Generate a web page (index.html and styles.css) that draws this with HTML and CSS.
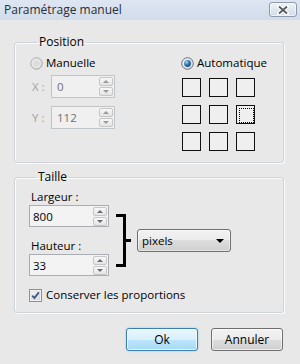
FILE: index.html
```html
<!DOCTYPE html>
<html lang="fr">
<head>
<meta charset="utf-8">
<title>Paramétrage manuel</title>
<link rel="stylesheet" href="styles.css">
</head>
<body>
<div class="titlebar">
  <span class="title">Paramétrage manuel</span>
  <span class="close">
    <svg width="12" height="10" viewBox="0 0 12 10"><path d="M2 1.5 L10 8.5 M10 1.5 L2 8.5" stroke="#fff" stroke-width="4" stroke-linecap="square"/><path d="M2 1.5 L10 8.5 M10 1.5 L2 8.5" stroke="#555b66" stroke-width="1.8"/></svg>
  </span>
</div>
<div class="content">
  <fieldset class="group group-pos">
    <legend>Position</legend>
    <div class="pos-cols">
      <div class="col-manual">
        <div class="radio disabled">
          <svg width="13" height="13" viewBox="0 0 13 13"><defs><linearGradient id="rg1" x1="0" y1="0" x2="1" y2="1"><stop offset="0" stop-color="#e9e9e9"/><stop offset="1" stop-color="#c9c9c9"/></linearGradient></defs><circle cx="6.5" cy="6.5" r="5.8" fill="url(#rg1)" stroke="#b1b1b1"/><circle cx="6.5" cy="6.5" r="4" fill="#dcdcdc" stroke="#f4f4f4" stroke-width="0.8"/></svg>
          <span>Manuelle</span>
        </div>
        <div class="coord">
          <span class="coord-label">X :</span>
          <div class="spin disabled"><span class="val">0</span><span class="arrows"><span class="arr up"></span><span class="arr down"></span></span></div>
        </div>
        <div class="coord coord-y">
          <span class="coord-label">Y :</span>
          <div class="spin disabled"><span class="val">112</span><span class="arrows"><span class="arr up"></span><span class="arr down"></span></span></div>
        </div>
      </div>
      <div class="col-auto">
        <div class="radio">
          <svg width="13" height="13" viewBox="0 0 13 13"><defs><linearGradient id="rg2" x1="0" y1="0" x2="1" y2="1"><stop offset="0" stop-color="#f6f6f6"/><stop offset="1" stop-color="#d4d6d9"/></linearGradient><radialGradient id="rd" cx="0.35" cy="0.3" r="0.8"><stop offset="0" stop-color="#a9dcfa"/><stop offset="0.5" stop-color="#2a79bd"/><stop offset="1" stop-color="#123f6e"/></radialGradient></defs><circle cx="6.5" cy="6.5" r="5.8" fill="url(#rg2)" stroke="#6b717a"/><circle cx="6.5" cy="6.5" r="3.4" fill="url(#rd)"/></svg>
          <span>Automatique</span>
        </div>
        <div class="anchor-grid">
          <span class="cell"></span><span class="cell"></span><span class="cell"></span>
          <span class="cell"></span><span class="cell"></span><span class="cell focus"></span>
          <span class="cell"></span><span class="cell"></span><span class="cell"></span>
        </div>
      </div>
    </div>
  </fieldset>

  <fieldset class="group group-size">
    <legend>Taille</legend>
    <div class="size-row">
      <div class="size-fields">
        <div class="field-label">Largeur :</div>
        <div class="spin wide"><span class="val">800</span><span class="arrows"><span class="arr up"></span><span class="arr down"></span></span></div>
        <div class="field-label second">Hauteur :</div>
        <div class="spin wide"><span class="val">33</span><span class="arrows"><span class="arr up"></span><span class="arr down"></span></span></div>
      </div>
      <div class="bracket-group">
        <span class="bracket"></span>
        <span class="tick"></span>
        <div class="select"><span>pixels</span><span class="caret"></span></div>
      </div>
    </div>
    <div class="check-row">
      <svg width="13" height="13" viewBox="0 0 13 13"><defs><linearGradient id="cg" x1="0" y1="0" x2="1" y2="1"><stop offset="0" stop-color="#f6f6f6"/><stop offset="1" stop-color="#dadada"/></linearGradient></defs><rect x="0.5" y="0.5" width="12" height="12" fill="#fff" stroke="#8e8f8f"/><rect x="2" y="2" width="9" height="9" fill="url(#cg)" stroke="#d0d0d0" stroke-width="0.6"/><path d="M3.2 6.6 L5.4 9 L9.8 3.4" fill="none" stroke="#3f5a8a" stroke-width="1.9"/></svg>
      <span>Conserver les proportions</span>
    </div>
  </fieldset>

  <div class="buttons">
    <button class="btn btn-default">Ok</button>
    <button class="btn">Annuler</button>
  </div>
</div>
</body>
</html>
```

FILE: styles.css
```css
* { box-sizing: border-box; }
html, body { margin: 0; padding: 0; }
body {
  width: 300px;
  height: 364px;
  overflow: hidden;
  background: #e8e8e8;
  font-family: "Open Sans", "Noto Sans", sans-serif;
  font-size: 11.5px;
  color: #000;
}
.titlebar {
  height: 20px;
  background: linear-gradient(#dde6f1, #d2dcea);
  display: flex;
  justify-content: space-between;
  align-items: flex-start;
  padding: 0 3px 0 4px;
}
.title {
  font-size: 12px;
  line-height: 19px;
  color: #2a2d33;
}
.close {
  margin-top: 2px;
  width: 28px;
  height: 15px;
  border: 1px solid #8e9bad;
  border-radius: 3px;
  background: linear-gradient(#eef2f7, #d3dce8);
  box-shadow: inset 0 0 0 1px rgba(255,255,255,0.6);
  display: flex;
  align-items: center;
  justify-content: center;
}
.content {
  padding: 14px 16px 0 14px;
}
.group {
  margin: 0;
  border: 1px solid #cdd4d9;
  border-radius: 3px;
  box-shadow: 1px 1px 0 #fbfbfb, inset 1px 1px 0 #fbfbfb;
  min-width: 0;
}
.group legend {
  margin-left: 7px;
  padding: 0 2px;
  font-size: 12px;
  line-height: 16px;
}
.group-pos { padding: 5px 0 11px 15px; }
.group-size { margin-top: 6px; padding: 4px 0 9px 14px; }

.pos-cols {
  display: grid;
  grid-template-columns: 151px 1fr;
}
.radio {
  display: flex;
  align-items: center;
  gap: 3px;
  height: 16px;
  line-height: 16px;
}
.radio.disabled span { color: #000; }
.coord {
  display: flex;
  align-items: center;
  margin-top: 4px;
}
.coord-y { margin-top: 8px; }
.coord-label {
  width: 21px;
  padding-left: 2px;
  color: #a3a3a3;
}
.spin {
  display: flex;
  align-items: center;
  width: 64px;
  height: 23px;
  border: 1px solid #b4b8bc;
  background: #f0f0f0;
  padding: 0 1px 0 5px;
}
.spin .val { flex: 1; }
.spin.disabled { border-color: #c2c5c8; }
.spin.disabled .val { color: #6f6f6f; }
.spin.wide {
  width: 80px;
  height: 22px;
  background: #f3f3f3;
  border-color: #abadb3;
  padding-left: 3px;
}
.arrows {
  display: flex;
  flex-direction: column;
  gap: 1px;
}
.arr {
  width: 14px;
  height: 9px;
  border: 1px solid #c6c6c6;
  border-radius: 2px;
  background: linear-gradient(#f8f8f8, #e4e4e4);
  display: flex;
  align-items: center;
  justify-content: center;
}
.arr::before {
  content: "";
  border-left: 3px solid transparent;
  border-right: 3px solid transparent;
}
.arr.up::before { border-bottom: 3px solid #6a6a6a; }
.arr.down::before { border-top: 3px solid #6a6a6a; }
.spin.disabled .arr.up::before { border-bottom-color: #9a9a9a; }
.spin.disabled .arr.down::before { border-top-color: #9a9a9a; }

.anchor-grid {
  margin-top: 7px;
  margin-left: 1px;
  display: grid;
  grid-template-columns: repeat(3, 19px);
  grid-auto-rows: 19px;
  gap: 8px;
}
.cell {
  border: 1px solid #111;
  background: #efefef;
}
.cell.focus {
  padding: 2px;
}
.cell.focus::before {
  content: "";
  display: block;
  width: 100%;
  height: 100%;
  border: 1px dotted #000;
}

.size-row {
  display: flex;
  align-items: flex-start;
}
.size-fields { width: 80px; }
.field-label {
  height: 16px;
  line-height: 16px;
  padding-left: 2px;
}
.field-label.second { margin-top: 11px; }
.bracket-group {
  display: flex;
  align-items: center;
  margin-top: 25px;
  margin-left: 7px;
}
.bracket {
  width: 10px;
  height: 53px;
  border: 3px solid #000;
  border-left: 0;
}
.tick {
  width: 5px;
  height: 3px;
  background: #000;
}
.select {
  margin-left: 6px;
  width: 94px;
  height: 23px;
  border: 1px solid #707070;
  border-radius: 3px;
  background: linear-gradient(#f2f2f2, #ebebeb 50%, #dddddd 50%, #cfcfcf);
  box-shadow: inset 0 0 0 1px rgba(255,255,255,0.5);
  display: flex;
  align-items: center;
  justify-content: space-between;
  padding: 0 6px 0 4px;
}
.caret {
  border-left: 4px solid transparent;
  border-right: 4px solid transparent;
  border-top: 4px solid #000;
}
.check-row {
  margin-top: 11px;
  display: flex;
  align-items: center;
  gap: 4px;
  height: 16px;
  line-height: 16px;
}

.buttons {
  display: flex;
  justify-content: flex-end;
  gap: 13px;
  margin-top: 15px;
  padding-right: 1px;
}
.btn {
  width: 72px;
  height: 23px;
  border: 1px solid #707070;
  border-radius: 3px;
  background: linear-gradient(#f2f2f2, #ebebeb 50%, #dddddd 50%, #cfcfcf);
  box-shadow: inset 0 0 0 1px rgba(255,255,255,0.6);
  font-family: inherit;
  font-size: 12px;
  color: #000;
  padding: 0;
}
.btn-default {
  border-color: #3c7fb1;
  background: linear-gradient(#eaf6fd, #d9f0fc 50%, #bee6fd 50%, #a7d9f5);
  box-shadow: inset 0 0 0 1px rgba(255,255,255,0.7), 0 0 2px #7fc8ef;
}
```
